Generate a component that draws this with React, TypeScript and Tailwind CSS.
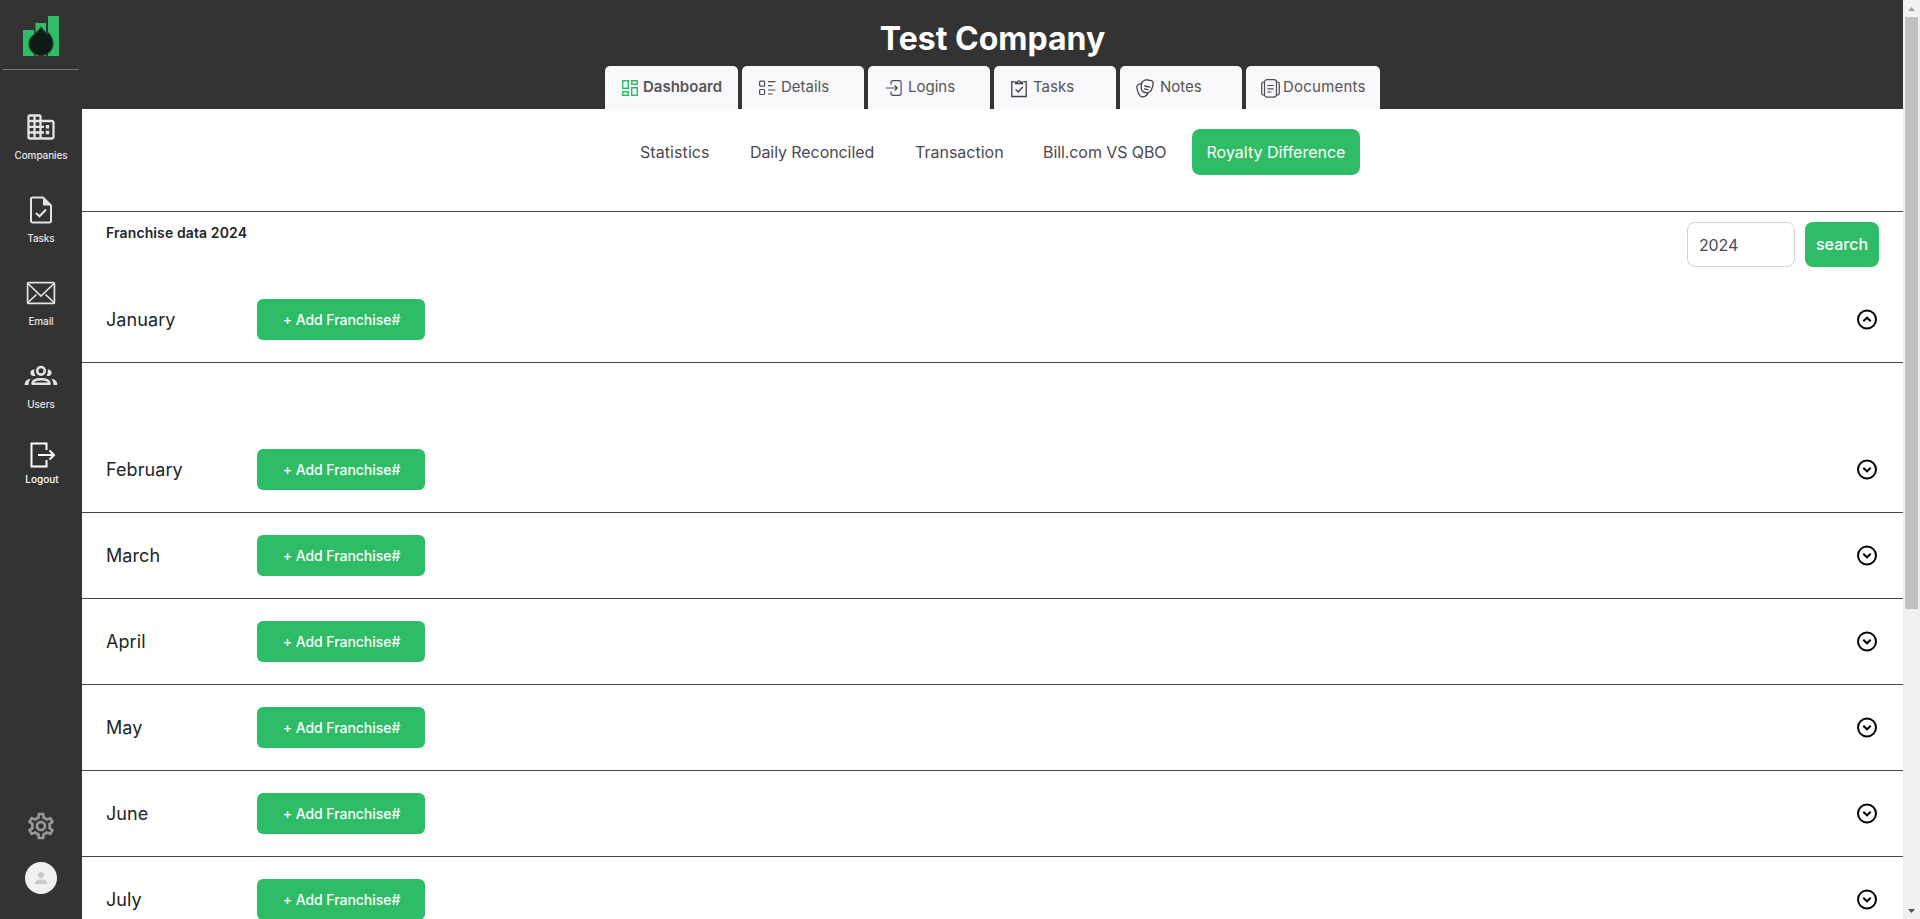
import React from 'react';
import { MdOutlineSettings, MdPerson } from 'react-icons/md';

const Logo = () => (
  <svg width="36" height="40" viewBox="0 0 36 40">
    <path fill="#2ebd66" d="M0 14h11v26H0zM12.500 7h10.500v33H12.500zM25 0h11v40H25z" />
    <path d="M18 11.500c2.500 3 4.500 4.200 5.500 6.500.8-.4 1-1 1-1.800 3 3 5.500 6.500 5.500 11.300a12 12 0 0 1-24 0c0-7 7-9 12-16z" fill="#101b17" stroke="#263d31" strokeWidth="1.200" />
  </svg>
);

const CompaniesIcon = () => (
  <svg width="28" height="26" viewBox="0 0 28 26" fill="none" stroke="#e4e4e4" strokeWidth="2.300">
    <rect x="1.500" y="1.500" width="12" height="23" rx="1.200" />
    <path d="M13.500 7H25a1.500 1.500 0 0 1 1.500 1.500V23a1.500 1.500 0 0 1-1.500 1.500H13.500M7.500 1v24M1 7h12M1 12.800h12M1 18.500h12M13.500 12.800H17M13.500 18.500H17" />
    <path d="M18.800 11h3.400v3.400h-3.400zM18.800 16.800h3.400v3.400h-3.400z" fill="#e4e4e4" stroke="none" />
  </svg>
);

const TaskFileIcon = () => (
  <svg width="24" height="28" viewBox="0 0 24 28" fill="none" stroke="#e4e4e4" strokeWidth="2">
    <path d="M3.500 1.500H14l8 8V25a1.500 1.500 0 0 1-1.500 1.500h-17A1.500 1.500 0 0 1 2 25V3a1.500 1.500 0 0 1 1.500-1.500z" />
    <path d="M14 1.500v8h8z" fill="#e4e4e4" stroke="none" />
    <path d="M7 17l3.500 3.300L17 13.500" />
  </svg>
);

const EmailIcon = () => (
  <svg width="30" height="24" viewBox="0 0 30 24" fill="none" stroke="#e4e4e4" strokeWidth="1.700">
    <rect x="1.600" y="1.600" width="26.800" height="20.800" rx="1" />
    <path d="M2 2.500L15 15 28 2.500M2 21.500l8.500-8M28 21.500l-8.500-8" />
  </svg>
);

const UsersIcon = () => (
  <svg width="34" height="22" viewBox="0 0 34 22" fill="none" stroke="#e4e4e4" strokeWidth="2.600">
    <circle cx="17" cy="5.800" r="3.800" />
    <path d="M8.500 18.800c0-3 3.800-4.600 8.500-4.600s8.500 1.600 8.500 4.600z" strokeLinejoin="round" />
    <path stroke="none" fill="#e4e4e4" d="M10.200 4.500a3.300 3.300 0 1 0 1.300 6A8 8 0 0 1 10.200 4.500zM23.800 4.500a3.300 3.300 0 1 1-1.300 6 8 8 0 0 0 1.300-6zM6.800 13.800C3 14 .6 16.500.6 20h4c0-2.500.6-4.500 2.200-6.200zM27.200 13.800c3.800.2 6.200 2.700 6.200 6.200h-4c0-2.500-.6-4.500-2.200-6.200z" />
  </svg>
);

const LogoutIcon = () => (
  <svg width="26" height="26" viewBox="0 0 26 26" fill="none" stroke="#fff" strokeWidth="2">
    <path d="M16.500 8V1.500h-15v23h15V18M8 13h16M19.500 8.500L24 13l-4.500 4.500" />
  </svg>
);

const DashboardIcon = () => (
  <svg width="16" height="16" viewBox="0 0 16 16" fill="none" stroke="#2ebd66" strokeWidth="1.400">
    <path d="M.7.7h5.600v7.600H.7zM9.700.7h5.600v3.600H9.700zM.7 11.700h5.600v3.600H.7zM9.700 7.700h5.600v7.600H9.700z" />
  </svg>
);

const DetailsIcon = () => (
  <svg width="17" height="16" viewBox="0 0 17 16" fill="none" stroke="#4b4b50" strokeWidth="1.200">
    <rect x=".6" y="1.200" width="5" height="5" rx="1" />
    <rect x=".6" y="9.500" width="5" height="5" rx="1" />
    <path d="M9 1.600h7.500M9 5.600h4.500M9 10h7.500M9 14h4.500" />
  </svg>
);

const LoginsIcon = () => (
  <svg width="16" height="16" viewBox="0 0 16 16" fill="none" stroke="#4b4b50" strokeWidth="1.200">
    <path d="M5 4.500V2.500A1.800 1.800 0 0 1 6.800.7h6.500a1.800 1.800 0 0 1 1.800 1.800v11a1.800 1.800 0 0 1-1.800 1.800H6.800A1.800 1.800 0 0 1 5 13.500v-2M0 8h11M8.800 5.500L11.300 8l-2.500 2.500" />
  </svg>
);

const ClipboardIcon = () => (
  <svg width="16" height="19" viewBox="0 0 16 19" fill="none" stroke="#3f3f44" strokeWidth="1.300">
    <path d="M3.500 2.700H.8v14.800h14.400V2.700h-2.700M4.500 4.500h7V3.200H9.800a1.900 1.900 0 0 0-3.600 0H4.500zM4.600 10.500l2.600 2.500 4.600-5" />
  </svg>
);

const NotesIcon = () => (
  <svg width="18" height="19" viewBox="0 0 18 19" fill="none" stroke="#3f3f44" strokeWidth="1.300" strokeLinecap="round">
    <path d="M8 1.500Q9.500.6 11 .9l4.300.8q2 .5 1.900 2.300-.2 3.500-1.500 6.300-1.500 3.400-4.900 3.500-3.400 0-5-2.400Q4.800 9 5.500 5q.5-2.500 2.500-3.500z" />
    <path d="M5.300 4.300L2.500 5.500Q.6 6.300.9 8.500q.5 4 2 6.800 1.500 2.900 4.600 2.500 3.500-.6 4.500-3.900M8.800 7l5 1.200M8.500 9.800l3.200.8" />
  </svg>
);

const DocumentsIcon = () => (
  <svg width="19" height="19" viewBox="0 0 19 19" fill="none" stroke="#4b4b50" strokeWidth="1.200">
    <rect x="3.500" y=".7" width="12" height="17.400" rx="2.500" />
    <path d="M3.500 3H2.800A2 2 0 0 0 .7 5v9a2 2 0 0 0 2.100 2h.7M15.500 3h.7a2 2 0 0 1 2.100 2v9a2 2 0 0 1-2.100 2h-.7M6.300 6.500h6.400M6.300 9.800h6.400M6.300 13h4" />
  </svg>
);

const CircleChevron = ({ open }: { open?: boolean }) => (
  <svg width="24" height="23" viewBox="0 0.5 24 23" fill="none" stroke="#000" strokeWidth="2">
    <circle cx="12" cy="12" r="9" />
    <path d={open ? 'M8.300 13.700L12 10.200l3.700 3.500' : 'M8.300 10.300L12 13.800l3.700-3.500'} />
  </svg>
);

const sideItems = [
  { label: 'Companies', icon: <CompaniesIcon /> },
  { label: 'Tasks', icon: <TaskFileIcon /> },
  { label: 'Email', icon: <EmailIcon /> },
  { label: 'Users', icon: <UsersIcon /> },
];

const tabs = [
  { label: 'Details', icon: <DetailsIcon />, cls: 'w-[122px] pl-[17px] gap-[5px]' },
  { label: 'Logins', icon: <LoginsIcon />, cls: 'w-[122px] pl-[18px] gap-[6px]' },
  { label: 'Tasks', icon: <ClipboardIcon />, cls: 'w-[122px] pl-[17px] gap-[6px]' },
  { label: 'Notes', icon: <NotesIcon />, cls: 'w-[122px] pl-[16px] gap-[6px]' },
  { label: 'Documents', icon: <DocumentsIcon />, cls: 'w-[134px] pl-[15px] gap-[3px] tracking-[0.015em]' },
];

const views = [
  { label: 'Statistics', cls: 'w-[70px] tracking-[0.005em]' },
  { label: 'Daily Reconciled', cls: 'w-[125px] tracking-[-0.005em]' },
  { label: 'Transaction', cls: 'w-[88px]' },
  { label: 'Bill.com VS QBO', cls: 'w-[124px] tracking-[-0.005em]' },
];

const months = ['January', 'February', 'March', 'April', 'May', 'June', 'July'];

export default function App() {
  return (
    <div className="flex h-[919px] w-full overflow-hidden bg-white font-['Inter',sans-serif] text-[#212529]">
      <aside className="flex w-[82px] shrink-0 flex-col items-center bg-[#333333] text-[10px] leading-[15px] font-medium text-[#e4e4e4]">
        <div className="mt-4 h-10"><Logo /></div>
        <div className="mt-[13px] h-px w-[76px] bg-[#777777]" />
        <nav className="mt-[41px] flex flex-col items-center">
          {sideItems.map((item) => (
            <div key={item.label} className="flex h-[83px] flex-col items-center">
              <div className="flex h-8 items-center">{item.icon}</div>
              <span className="mt-[5px] tracking-[-0.01em]">{item.label}</span>
            </div>
          ))}
          <div className="-mt-1 flex flex-col items-center pl-[2px] text-white">
            <div className="flex h-8 items-center pl-[2px]"><LogoutIcon /></div>
            <span className="mt-px">Logout</span>
          </div>
        </nav>
        <div className="mt-auto mb-[25px] flex flex-col items-center gap-[20px]">
          <MdOutlineSettings className="size-8 text-[#97979c]" />
          <div className="flex size-8 items-center justify-center rounded-full bg-[#f0f0f0]">
            <MdPerson className="size-[18px] text-[#c8c8c8]" />
          </div>
        </div>
      </aside>

      <main className="flex min-w-0 flex-1 flex-col">
        <header className="flex h-[109px] shrink-0 flex-col items-center bg-[#333333]">
          <h1 className="mt-[19px] h-[47px] text-[32px] leading-[40px] font-bold text-white">Test Company</h1>
          <div className="flex h-[43px] gap-1 text-[15px] text-[#555555]">
            <div className="flex h-[45px] w-[133px] items-start gap-[5px] rounded-t-[5px] bg-[#f9f9fc] pl-[17px] font-semibold">
              <span className="mt-[14px]"><DashboardIcon /></span>
              <span className="mt-[9px] leading-6">Dashboard</span>
            </div>
            {tabs.map((t) => (
              <div key={t.label} className={`flex rounded-t-[5px] bg-[#f9f9fc] ${t.cls}`}>
                <span className="mt-[12px] flex h-5 items-center">{t.icon}</span>
                <span className="mt-[9px] leading-6">{t.label}</span>
              </div>
            ))}
          </div>
        </header>

        <div className="flex h-[103px] shrink-0 justify-center border-b border-[#444444] pt-5 text-[#4a4a4f]">
          <div className="ml-[15px] flex h-[46px] items-center text-base">
            {views.map((v) => (
              <span key={v.label} className={`mr-[40px] whitespace-nowrap ${v.cls}`}>{v.label}</span>
            ))}
            <button className="-ml-[15px] h-[46px] w-[168px] rounded-lg bg-[#2ebd66] whitespace-nowrap text-white">Royalty Difference</button>
          </div>
        </div>

        <div className="flex h-[65px] shrink-0 justify-between pt-[10px] pr-6 pl-6">
          <h2 className="mt-[1px] text-sm leading-5 font-semibold tracking-[0.008em]">Franchise data 2024</h2>
          <div className="flex gap-[10px]">
            <input defaultValue="2024" className="h-[45px] w-[108px] rounded-lg border border-[#d0d2d5] px-[11px] text-base tracking-[-0.01em] text-[#4a4a4f]" />
            <button className="h-[45px] w-[74px] rounded-lg bg-[#2ebd66] pb-px text-base font-medium text-white">search</button>
          </div>
        </div>

        {months.map((m, i) => (
          <section key={m} className="shrink-0">
            <div className="flex h-[86px] items-center border-b border-[#444444] pl-6 pr-6">
              <span className="w-[151px] text-lg tracking-[0.004em]">{m}</span>
              <button className="h-[41px] w-[168px] rounded-md bg-[#2ebd66] pl-px text-sm font-medium tracking-[-0.003em] text-white">+ Add Franchise#</button>
              <span className="ml-auto"><CircleChevron open={i === 0} /></span>
            </div>
            {i === 0 && <div className="h-16" />}
          </section>
        ))}
      </main>

      <div className="flex w-[17px] shrink-0 flex-col items-center bg-[#f1f1f1]">
        <div className="flex h-[17px] items-center">
          <svg width="7" height="4" viewBox="0 0 7 4"><path d="M0 4l3.500-4L7 4z" fill="#a3a3a3" /></svg>
        </div>
        <div className="h-[592px] w-[13px] bg-[#c1c1c1]" />
        <div className="mt-auto flex h-[17px] items-center">
          <svg width="7" height="4" viewBox="0 0 7 4"><path d="M0 0l3.500 4L7 0z" fill="#505050" /></svg>
        </div>
      </div>
    </div>
  );
}
